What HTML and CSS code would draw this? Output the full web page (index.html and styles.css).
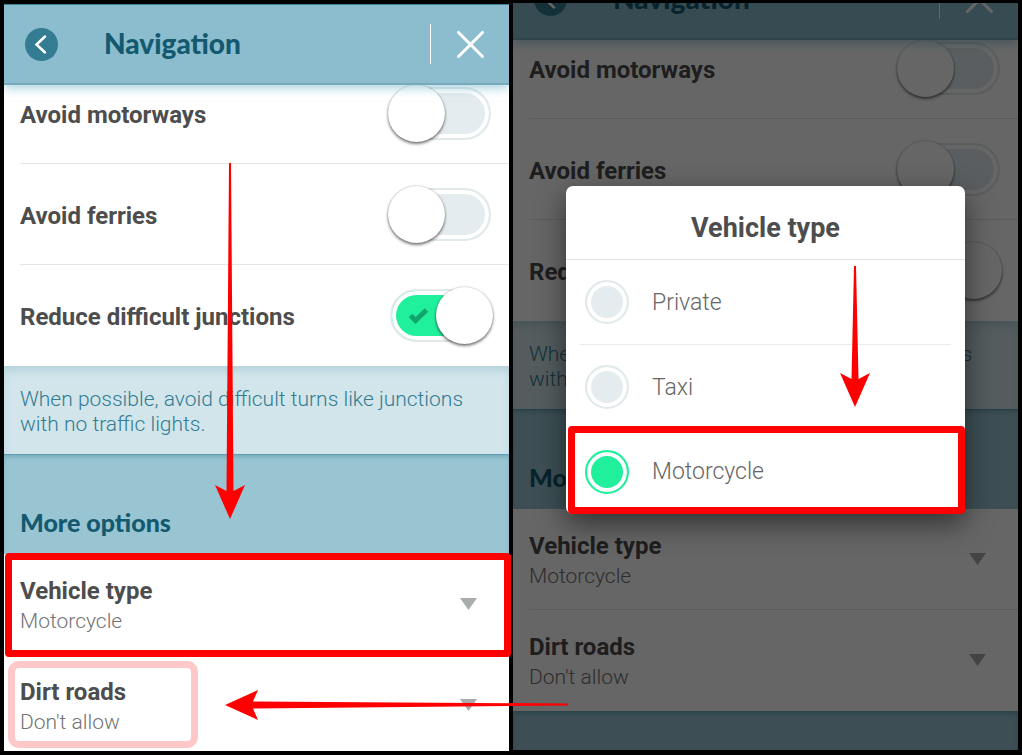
FILE: index.html
```
<!DOCTYPE html>
<html lang="en">
<head>
<meta charset="utf-8">
<meta name="viewport" content="width=device-width, initial-scale=1">
<title>Navigation settings</title>
<link rel="stylesheet" href="styles.css">
</head>
<body>
<main class="guide">
  <section class="phone">
    <div class="screen">
      <header class="bar">
        <button class="back" aria-label="Back"><svg viewBox="0 0 33 33" aria-hidden="true"><path d="M20 8.500 11.500 16.500 20 24.500"/></svg></button>
        <h1 class="title">Navigation</h1>
        <button class="close" aria-label="Close"><svg viewBox="0 0 27 27" aria-hidden="true"><path d="M1.500 1.500 25.500 25.500M25.500 1.500 1.500 25.500"/></svg></button>
      </header>
      <div class="group switches">
        <div class="row"><label class="name" for="a-motorways">Avoid motorways</label><span class="switch"><input type="checkbox" id="a-motorways"></span></div>
        <div class="row"><label class="name" for="a-ferries">Avoid ferries</label><span class="switch"><input type="checkbox" id="a-ferries"></span></div>
        <div class="row"><label class="name" for="a-junctions">Reduce difficult junctions</label><span class="switch"><input type="checkbox" id="a-junctions" checked><svg class="tick" viewBox="0 0 22 17" aria-hidden="true"><path d="M2.500 8.500 7.500 13.500 18.500 3"/></svg></span></div>
      </div>
      <p class="hint">When possible, avoid difficult turns like junctions with no traffic lights.</p>
      <h2 class="heading">More options</h2>
      <div class="group">
        <div class="row"><div class="field"><label class="name" for="a-vehicle">Vehicle type</label><select id="a-vehicle"><option>Motorcycle</option></select></div><svg class="caret" viewBox="0 0 17 12" aria-hidden="true"><path d="M0 0H17L8.500 12Z"/></svg></div>
        <div class="row"><div class="field"><label class="name" for="a-dirt">Dirt roads</label><select id="a-dirt"><option>Don't allow</option></select></div><svg class="caret" viewBox="0 0 17 12" aria-hidden="true"><path d="M0 0H17L8.500 12Z"/></svg></div>
      </div>
    </div>
    <span class="mark mark-vehicle"></span>
    <span class="mark mark-dirt"></span>
    <svg class="arrow arrow-long" viewBox="0 0 30 356" aria-hidden="true"><path d="M14 0H16L18.500 328 30 322 15 356 0 322 11.500 328Z"/></svg>
  </section>

  <section class="phone dimmed">
    <div class="screen scrolled">
      <header class="bar">
        <button class="back" aria-label="Back"><svg viewBox="0 0 33 33" aria-hidden="true"><path d="M20 8.500 11.500 16.500 20 24.500"/></svg></button>
        <h1 class="title">Navigation</h1>
        <button class="close" aria-label="Close"><svg viewBox="0 0 27 27" aria-hidden="true"><path d="M1.500 1.500 25.500 25.500M25.500 1.500 1.500 25.500"/></svg></button>
      </header>
      <div class="group switches">
        <div class="row"><label class="name" for="b-motorways">Avoid motorways</label><span class="switch"><input type="checkbox" id="b-motorways"></span></div>
        <div class="row"><label class="name" for="b-ferries">Avoid ferries</label><span class="switch"><input type="checkbox" id="b-ferries"></span></div>
        <div class="row"><label class="name" for="b-junctions">Reduce difficult junctions</label><span class="switch"><input type="checkbox" id="b-junctions" checked><svg class="tick" viewBox="0 0 22 17" aria-hidden="true"><path d="M2.500 8.500 7.500 13.500 18.500 3"/></svg></span></div>
      </div>
      <p class="hint">When possible, avoid difficult turns like junctions with no traffic lights.</p>
      <h2 class="heading">More options</h2>
      <div class="group">
        <div class="row"><div class="field"><label class="name" for="b-vehicle">Vehicle type</label><select id="b-vehicle"><option>Motorcycle</option></select></div><svg class="caret" viewBox="0 0 17 12" aria-hidden="true"><path d="M0 0H17L8.500 12Z"/></svg></div>
        <div class="row"><div class="field"><label class="name" for="b-dirt">Dirt roads</label><select id="b-dirt"><option>Don't allow</option></select></div><svg class="caret" viewBox="0 0 17 12" aria-hidden="true"><path d="M0 0H17L8.500 12Z"/></svg></div>
      </div>
      <div class="footer"></div>
    </div>
    <div class="backdrop">
      <div class="dialog" role="dialog" aria-labelledby="dialog-title">
        <h2 class="dialog-title" id="dialog-title">Vehicle type</h2>
        <label class="choice"><input type="radio" name="vehicle">Private</label>
        <label class="choice"><input type="radio" name="vehicle">Taxi</label>
        <label class="choice"><input type="radio" name="vehicle" checked>Motorcycle</label>
        <span class="mark mark-choice"></span>
        <svg class="arrow arrow-short" viewBox="0 0 30 141" aria-hidden="true"><path d="M14 0H16L18.500 113 30 107 15 141 0 107 11.500 113Z"/></svg>
      </div>
    </div>
    <svg class="arrow arrow-side" viewBox="0 0 343 30" aria-hidden="true"><path d="M343 13.500V15.500L28 18.500 33 30 0 15 33 0 28 11.500Z"/></svg>
  </section>
</main>
</body>
</html>
```
FILE: styles.css
```
* { box-sizing: border-box; }

body {
  margin: 0;
  background: #000;
  font-family: Roboto, "Liberation Sans", sans-serif;
  color: #4d4d4d;
}

h1, h2, p { margin: 0; }

button, select {
  border: 0;
  padding: 0;
  background: none;
  font: inherit;
  color: inherit;
}

.guide {
  display: grid;
  grid-template-columns: 1fr 1fr;
  gap: 4px;
  height: 100vh;
  padding: 4px;
}

.phone {
  position: relative;
  min-width: 0;
  min-height: 0;
}

.dimmed { margin: -1px 0 1px; }

.screen {
  height: 100%;
  overflow: hidden;
  background: #fff;
}

.scrolled .bar { margin-top: -44px; }

/* Top bar */
.bar {
  position: relative;
  z-index: 1;
  display: flex;
  align-items: center;
  height: 81px;
  padding: 0 25px 0 21px;
  background: #8bbdce;
  border-top: 1px solid #3c8197;
  border-bottom: 2px solid #76aabc;
  box-shadow: 0 3px 10px rgba(110, 180, 200, 0.6);
}

.back svg {
  display: block;
  width: 33px;
  height: 33px;
  border-radius: 50%;
  background: #337c92;
}

.back path, .close path {
  fill: none;
  stroke: #fff;
  stroke-width: 3;
  stroke-linecap: round;
}

.back path { stroke-width: 2.5; }

.title {
  flex: 1;
  margin-left: 46px;
  padding-bottom: 2px;
  font-family: Lato, sans-serif;
  font-size: 28px;
  font-weight: 900;
  line-height: 32px;
  color: #13596f;
}

.close {
  height: 40px;
  padding-left: 26px;
  border-left: 1px solid #fff;
}

.close svg {
  display: block;
  width: 27px;
  height: 27px;
}

/* Setting rows */
.group { background: #fff; }

.switches { margin-top: -22px; }

.row {
  display: flex;
  align-items: center;
  justify-content: space-between;
  height: 101px;
  margin-left: 16px;
  padding-right: 18px;
  border-bottom: 1px solid #e6e6e6;
}

.row:last-child { border-bottom-color: transparent; }

.name {
  font-size: 24px;
  font-weight: 700;
  line-height: 30px;
}

.switches .name { padding-top: 4px; }

.field {
  display: flex;
  flex: 1;
  flex-direction: column;
  padding-top: 4px;
}

.field select {
  appearance: none;
  height: 30px;
  font-size: 21px;
  font-weight: 300;
  line-height: 30px;
  color: #737373;
}

.caret {
  width: 17px;
  height: 12px;
  margin-right: 14px;
  fill: #a9acad;
}

/* Switches */
.switch {
  position: relative;
  display: flex;
}

.switch input {
  appearance: none;
  position: relative;
  width: 101px;
  height: 53px;
  margin: 0;
  border: 2px solid #e2e9eb;
  border-radius: 27px;
  background: #e4ecef;
  box-shadow: inset 0 0 0 4px #fff;
}

.switch input::before {
  content: "";
  position: absolute;
  top: -4px;
  left: -4px;
  width: 57px;
  height: 57px;
  border-radius: 50%;
  background: #fff;
  box-shadow: 0 2px 3px rgba(0, 0, 0, 0.5), 0 0 2px rgba(0, 0, 0, 0.3);
}

.switch input:checked { background: #20f09c; }

.switch input:checked::before {
  right: -4px;
  left: auto;
}

.tick {
  position: absolute;
  top: 18px;
  left: 18px;
  width: 22px;
  height: 17px;
  fill: none;
  stroke: #10a56c;
  stroke-width: 5;
}

/* Hint and heading */
.hint {
  padding: 21px 16px 17px;
  background: #d1e5eb;
  box-shadow: inset 0 6px 8px -2px #b0d0da;
  font-size: 21px;
  font-weight: 300;
  line-height: 25px;
  color: #337c92;
}

.heading {
  padding: 53px 16px 17px;
  background: #98c5d1;
  box-shadow: inset 0 1px #5f9cb0, inset 0 4px 4px -1px #75aabb;
  font-family: Lato, sans-serif;
  font-size: 25px;
  font-weight: 900;
  line-height: 30px;
  color: #13596f;
}

.footer {
  height: 100px;
  background: #98c5d1;
  box-shadow: inset 0 3px 4px #6fa6b8;
}

/* Dialog */
.backdrop {
  position: absolute;
  z-index: 2;
  inset: 0;
  padding-top: 183px;
  background: rgba(0, 0, 0, 0.6);
}

.dialog {
  position: relative;
  width: 79%;
  margin: 0 auto;
  border-radius: 7px;
  background: #fff;
  box-shadow: 0 10px 28px rgba(0, 0, 0, 0.5);
}

.dialog-title {
  padding: 26px 0 15px;
  border-bottom: 1px solid #e4e6e6;
  font-size: 27px;
  font-weight: 700;
  line-height: 32px;
  text-align: center;
}

.choice {
  display: flex;
  align-items: center;
  gap: 23px;
  height: 85px;
  margin: 0 14px;
  padding-left: 5px;
  border-bottom: 1px solid #e9ebeb;
  font-size: 23px;
  font-weight: 300;
  color: #666;
}

.choice:last-of-type {
  height: 84px;
  border-bottom-color: transparent;
}

.choice input {
  appearance: none;
  width: 44px;
  height: 44px;
  margin: 0;
  border: 2px solid #e2e9eb;
  border-radius: 50%;
  background: #e4ecef;
  box-shadow: inset 0 0 0 4px #fff;
}

.choice input:checked {
  border-color: #20f09c;
  background: #20f09c;
}

/* Annotations drawn over the screens */
.mark {
  position: absolute;
  border: 7px solid #f00;
  border-radius: 4px;
  pointer-events: none;
}

.mark-vehicle {
  top: 549px;
  right: -2px;
  left: 1px;
  z-index: 3;
  height: 104px;
}

.mark-dirt {
  top: 657px;
  left: 4px;
  width: 190px;
  height: 87px;
  border-color: #ffc8c8;
  border-radius: 11px;
}

.mark-choice {
  right: 0;
  bottom: 0;
  left: 2px;
  height: 88px;
}

.arrow {
  position: absolute;
  z-index: 3;
  fill: #f00;
  pointer-events: none;
}

.arrow-long {
  top: 159px;
  left: 211px;
  width: 30px;
  height: 356px;
}

.arrow-short {
  top: 80px;
  right: 95px;
  width: 30px;
  height: 141px;
}

.arrow-side {
  top: 687px;
  left: -288px;
  width: 343px;
  height: 30px;
}
```
